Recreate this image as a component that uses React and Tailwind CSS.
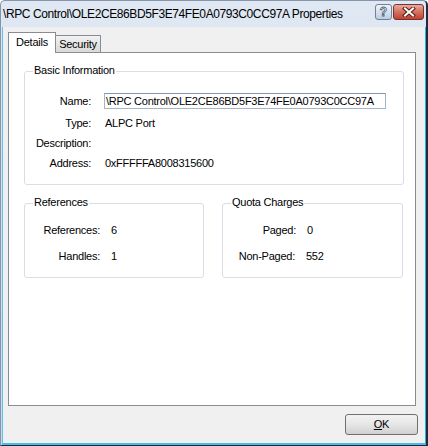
import React from 'react';

// Small field row: right-aligned label, then a value
function Field({ label, labelW, gap, children, className = '' }) {
  return (
    <div className={`flex items-center h-[20px] ${className}`}>
      <div className="text-right shrink-0" style={{ width: labelW }}>{label}</div>
      <div style={{ marginLeft: gap }}>{children}</div>
    </div>
  );
}

function GroupBox({ title, className = '', children }) {
  return (
    <div className={`relative border border-[#d5dfe5] rounded-[3px] ${className}`}>
      <div className="absolute top-[-8px] left-[8px] px-[1px] bg-white leading-[13px]">{title}</div>
      {children}
    </div>
  );
}

export default function App() {
  return (
    <div
      className="w-[428px] h-[446px] flex flex-col overflow-hidden rounded-t-[5px] border-t border-l border-[#8596ab] border-r-2 border-b border-r-[#1d2b3a] border-b-[#1d2b3a] bg-gradient-to-b from-[#dfe8f3] to-[#c9d8ea] text-black"
      style={{ fontFamily: '"Liberation Sans", Arial, sans-serif' }}
    >
      {/* Title bar */}
      <div className="h-[26px] shrink-0 flex items-center pl-[2px] pr-[2px]">
        <div className="flex-1 text-[12px] tracking-[-0.4px] leading-[14px] whitespace-nowrap">
          \RPC Control\OLE2CE86BD5F3E74FE0A0793C0CC97A Properties
        </div>
        <div className="self-start mt-[3px] flex gap-[1px]">
          <div className="w-[17px] h-[16px] rounded-[3px] border border-[#6f8197] bg-gradient-to-b from-[#eef3f9] via-[#d6e1ee] to-[#bccde2] flex items-center justify-center">
            <span className="text-[12px] font-bold leading-none text-white [-webkit-text-stroke:0.8px_#4c5d73]">?</span>
          </div>
          <div className="w-[31px] h-[16px] rounded-[3px] border border-[#7a332c] bg-gradient-to-b from-[#e8aa9f] via-[#d2705f] to-[#c0402f] flex items-center justify-center">
            <svg width="14" height="10" viewBox="0 0 14 10">
              <path d="M3 1.5 L11 8.5 M11 1.5 L3 8.5" stroke="#5a1e18" strokeWidth="4" strokeLinecap="square" />
              <path d="M3 1.5 L11 8.5 M11 1.5 L3 8.5" stroke="#ffffff" strokeWidth="2" strokeLinecap="square" />
            </svg>
          </div>
        </div>
      </div>

      {/* Client area */}
      <div className="flex-1 flex flex-col ml-[1px] bg-[#f0f0f0] border-l border-r border-b-2 border-l-[#5ec2ea] border-r-[#2fb0e6] border-b-[#45bde9] pt-[5px] text-[11px] tracking-[-0.25px] leading-[13px]">
        {/* Tabs */}
        <div className="flex items-end h-[20px] ml-[5px]">
          <div className="relative z-10 w-[48px] h-[21px] mb-[-1px] bg-white border-l border-t border-r border-[#898c95] flex items-center justify-center pb-[1px]">
            Details
          </div>
          <div className="w-[46px] h-[17px] ml-[-1px] border-t border-r border-l border-[#898c95] bg-gradient-to-b from-[#f2f2f2] to-[#d9d9d9] flex items-center justify-center">
            Security
          </div>
        </div>

        {/* Panel */}
        <div className="ml-[5px] w-[408px] h-[354px] border border-[#898c95] bg-white">
          <GroupBox title="Basic Information" className="ml-[15px] mt-[18px] w-[380px] h-[114px] pt-[19px]">
            <Field label="Name:" labelW={66} gap={13}>
              <div className="w-[282px] h-[16px] border border-[#a6b5c6] border-t-[#7c98b6] pl-[1px] flex items-center whitespace-nowrap">
                \RPC Control\OLE2CE86BD5F3E74FE0A0793C0CC97A
              </div>
            </Field>
            <Field label="Type:" labelW={66} gap={14} className="mt-[2px]">ALPC Port</Field>
            <Field label="Description:" labelW={66} gap={14}>{''}</Field>
            <Field label="Address:" labelW={66} gap={14}>0xFFFFFA8008315600</Field>
          </GroupBox>

          <div className="flex ml-[15px] mt-[18px] gap-[18px]">
            <GroupBox title="References" className="w-[180px] h-[75px] pt-[16px]">
              <Field label="References:" labelW={75} gap={11}>6</Field>
              <Field label="Handles:" labelW={75} gap={11} className="mt-[6px]">1</Field>
            </GroupBox>
            <GroupBox title="Quota Charges" className="w-[181px] h-[75px] pt-[16px]">
              <Field label="Paged:" labelW={73} gap={11}>0</Field>
              <Field label="Non-Paged:" labelW={72} gap={11} className="mt-[6px]">552</Field>
            </GroupBox>
          </div>
        </div>

        {/* Buttons */}
        <div className="flex justify-end mt-[8px] mr-[7px]">
          <button className="w-[73px] h-[21px] rounded-[3px] border border-[#707070] bg-gradient-to-b from-[#f2f2f2] via-[#e6e6e6] to-[#d0d0d0] flex items-center justify-center text-[11px]">
            <span><span className="underline">O</span>K</span>
          </button>
        </div>
      </div>
    </div>
  );
}
